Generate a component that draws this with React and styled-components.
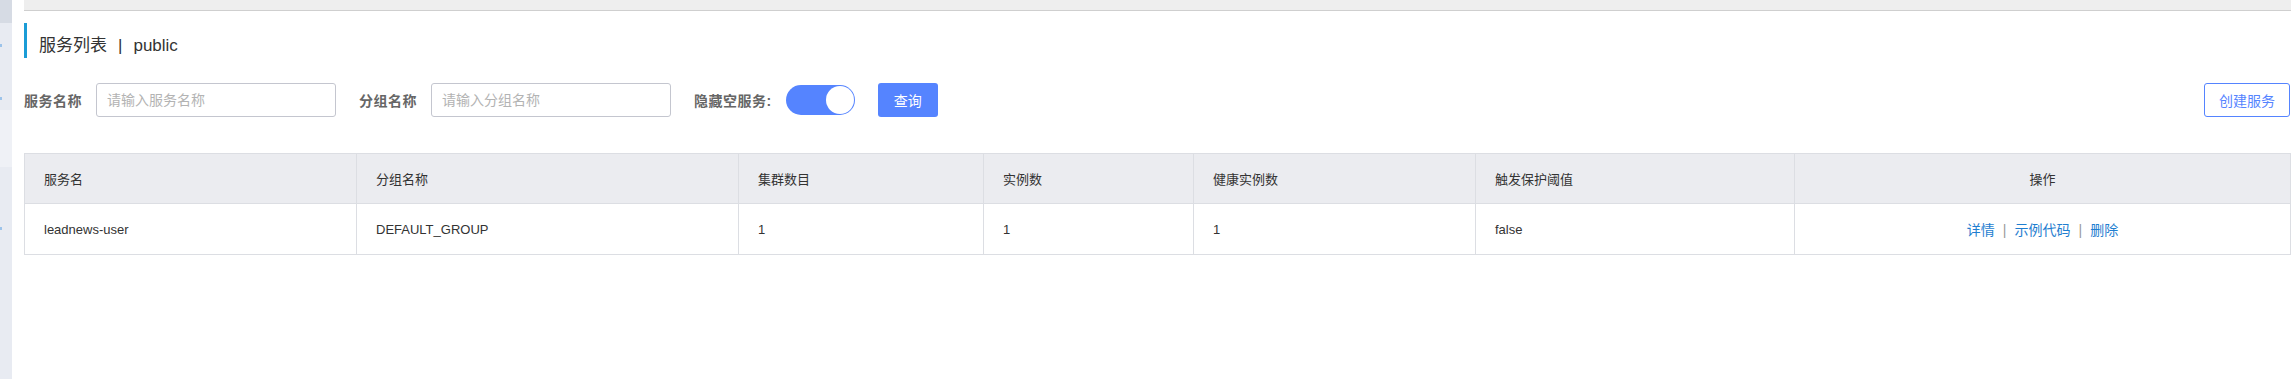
import React from "react";
import styled, { createGlobalStyle } from "styled-components";

const GlobalStyle = createGlobalStyle`
  html, body {
    margin: 0;
    padding: 0;
    background: #fff;
  }
  body {
    font-family: "Liberation Sans", "Noto Sans CJK SC", sans-serif;
    color: #333;
  }
  * { box-sizing: border-box; }
`;

const columns = [
  { key: "name", title: "服务名", width: 332 },
  { key: "group", title: "分组名称", width: 382 },
  { key: "clusters", title: "集群数目", width: 245 },
  { key: "instances", title: "实例数", width: 210 },
  { key: "healthy", title: "健康实例数", width: 282 },
  { key: "threshold", title: "触发保护阈值", width: 319 },
  { key: "ops", title: "操作", width: 496, center: true },
];

const rows = [
  {
    name: "leadnews-user",
    group: "DEFAULT_GROUP",
    clusters: 1,
    instances: 1,
    healthy: 1,
    threshold: "false",
  },
];

const App = () => {
  return (
    <Page>
      <GlobalStyle />
      <Sidebar>
        <SideBlock $h={23} $bg="#d6dbe4" />
        <SideBlock $h={87} $bg="#e8ebf2">
          <SideMark $top={21} />
          <SideMark $top={74} />
        </SideBlock>
        <SideBlock $h={57} $bg="#eff1f6" />
        <SideBlock $grow $bg="#e8ebf2">
          <SideMark $top={60} />
        </SideBlock>
      </Sidebar>
      <Main>
        <TopBar />
        <Content>
          <PageTitle>
            服务列表<Divider>|</Divider>public
          </PageTitle>
          <FilterRow>
            <FormItem>
              <Label>服务名称</Label>
              <Input placeholder="请输入服务名称" />
            </FormItem>
            <FormItem>
              <Label>分组名称</Label>
              <Input placeholder="请输入分组名称" />
            </FormItem>
            <FormItem>
              <Label>隐藏空服务:</Label>
              <Switch $on>
                <Knob />
              </Switch>
            </FormItem>
            <PrimaryButton>查询</PrimaryButton>
            <OutlineButton>创建服务</OutlineButton>
          </FilterRow>
          <Table>
            <colgroup>
              {columns.map((c) => (
                <col key={c.key} style={{ width: c.width }} />
              ))}
            </colgroup>
            <thead>
              <tr>
                {columns.map((c) => (
                  <Th key={c.key} $center={c.center}>
                    {c.title}
                  </Th>
                ))}
              </tr>
            </thead>
            <tbody>
              {rows.map((r) => (
                <tr key={r.name}>
                  <Td>{r.name}</Td>
                  <Td>{r.group}</Td>
                  <Td>{r.clusters}</Td>
                  <Td>{r.instances}</Td>
                  <Td>{r.healthy}</Td>
                  <Td>{r.threshold}</Td>
                  <Td $center>
                    <Link>详情</Link>
                    <Sep>|</Sep>
                    <Link>示例代码</Link>
                    <Sep>|</Sep>
                    <Link>删除</Link>
                  </Td>
                </tr>
              ))}
            </tbody>
          </Table>
        </Content>
      </Main>
    </Page>
  );
};

const Page = styled.div`
  display: flex;
  width: 100%;
  min-height: 379px;
`;

const Sidebar = styled.aside`
  width: 12px;
  flex-shrink: 0;
  display: flex;
  flex-direction: column;
  min-height: 379px;
`;

const SideBlock = styled.div`
  position: relative;
  height: ${({ $h }) => ($h ? `${$h}px` : "auto")};
  flex: ${({ $grow }) => ($grow ? 1 : "none")};
  background: ${({ $bg }) => $bg};
`;

const SideMark = styled.span`
  position: absolute;
  left: 0;
  top: ${({ $top }) => $top}px;
  width: 2px;
  height: 3px;
  background: #9cc3ea;
`;

const Main = styled.main`
  flex: 1;
  padding-left: 12px;
  padding-right: 1px;
`;

const TopBar = styled.div`
  height: 11px;
  background: #eeeeee;
  border-bottom: 1px solid #cfcfcf;
`;

const Content = styled.div`
  padding-top: 12px;
`;

const PageTitle = styled.h2`
  margin: 0;
  height: 35px;
  padding-top: 10px;
  line-height: 25px;
  border-left: 3px solid #1b9cd6;
  padding-left: 12px;
  font-size: 17px;
  font-weight: 400;
  color: #333;
`;

const Divider = styled.span`
  margin: 0 11px;
`;

const FilterRow = styled.div`
  display: flex;
  align-items: center;
  margin-top: 25px;
  height: 34px;
`;

const FormItem = styled.div`
  display: flex;
  align-items: center;
  margin-right: 23px;
`;

const Label = styled.label`
  font-size: 14px;
  font-weight: 700;
  letter-spacing: 0.5px;
  color: #666;
  margin-right: 14px;
  white-space: nowrap;
`;

const Input = styled.input`
  width: 240px;
  height: 34px;
  border: 1px solid #c4c6cf;
  border-radius: 3px;
  padding: 0 10px;
  font-size: 14px;
  font-family: "Liberation Sans", "Noto Sans CJK SC", sans-serif;
  outline: none;
  &::placeholder {
    color: #b3b3b3;
  }
`;

const Switch = styled.div`
  width: 69px;
  height: 30px;
  border-radius: 15px;
  background: ${({ $on }) => ($on ? "#5584ff" : "#d1d1d1")};
  display: flex;
  align-items: center;
  justify-content: ${({ $on }) => ($on ? "flex-end" : "flex-start")};
  padding: 0 1px;
`;

const Knob = styled.span`
  width: 28px;
  height: 28px;
  border-radius: 50%;
  background: #fff;
`;

const PrimaryButton = styled.button`
  height: 34px;
  width: 60px;
  border: none;
  border-radius: 3px;
  background: #5584ff;
  color: #fff;
  font-size: 14px;
  font-family: "Liberation Sans", "Noto Sans CJK SC", sans-serif;
  padding: 0;
`;

const OutlineButton = styled.button`
  margin-left: auto;
  height: 34px;
  width: 86px;
  border: 1px solid #5584ff;
  border-radius: 3px;
  background: #fff;
  color: #5584ff;
  font-size: 14px;
  font-family: "Liberation Sans", "Noto Sans CJK SC", sans-serif;
  padding: 0;
  margin-right: 1px;
`;

const Table = styled.table`
  margin-top: 36px;
  width: 100%;
  border-collapse: collapse;
  table-layout: fixed;
  border: 1px solid #dcdee3;
  font-size: 13px;
`;

const Th = styled.th`
  height: 50px;
  padding: 0 0 0 19px;
  background: #ebecf0;
  border: 1px solid #dcdee3;
  text-align: ${({ $center }) => ($center ? "center" : "left")};
  font-weight: 400;
  color: #333;
  ${({ $center }) => ($center ? "padding: 0;" : "")}
`;

const Td = styled.td`
  height: 51px;
  padding: 0 0 0 19px;
  border: 1px solid #dcdee3;
  text-align: ${({ $center }) => ($center ? "center" : "left")};
  color: #333;
  ${({ $center }) => ($center ? "padding: 0;" : "")}
`;

const Link = styled.a`
  font-size: 14px;
  color: #1f7ed0;
  cursor: pointer;
`;

const Sep = styled.span`
  margin: 0 8px;
  color: #999;
  font-size: 14px;
`;

export default App;
